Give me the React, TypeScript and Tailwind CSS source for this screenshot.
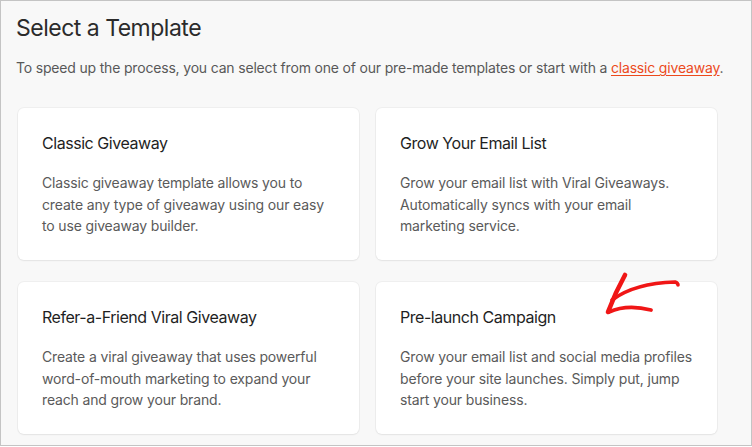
const templates = [
  {
    title: "Classic Giveaway",
    lines: ["Classic giveaway template allows you to", "create any type of giveaway using our easy", "to use giveaway builder."],
  },
  {
    title: "Grow Your Email List",
    lines: ["Grow your email list with Viral Giveaways.", "Automatically syncs with your email", "marketing service."],
  },
  {
    title: "Refer-a-Friend Viral Giveaway",
    lines: ["Create a viral giveaway that uses powerful", "word-of-mouth marketing to expand your", "reach and grow your brand."],
  },
  {
    title: "Pre-launch Campaign",
    lines: ["Grow your email list and social media profiles", "before your site launches. Simply put, jump", "start your business."],
  },
];

function TemplateCard({ title, lines }: { title: string; lines: string[] }) {
  return (
    <article className="h-[152px] rounded-[6px] bg-white pl-[24px] pt-[23px] shadow-[0_0_0_1px_rgba(0,0,0,0.035),0_1px_2px_rgba(0,0,0,0.05)]">
      <h3 className="text-[16px] leading-[24px] tracking-[-0.45px] text-[#1f1f1f]">{title}</h3>
      <p className="mt-[17px] whitespace-nowrap text-[14px] leading-[21.5px] tracking-[-0.15px] text-[#5a5a5a]">
        {lines.map((line, i) => (
          <span key={i} className="block">
            {line}
          </span>
        ))}
      </p>
    </article>
  );
}

function HandArrow() {
  return (
    <svg
      className="pointer-events-none absolute left-[594px] top-[267px]"
      width="95"
      height="55"
      viewBox="0 0 95 55"
      fill="none"
      stroke="#f01616"
      strokeLinecap="round"
      strokeLinejoin="round"
    >
      <path d="M30 7 Q20 25 13 44" strokeWidth="4.6" />
      <path d="M17 32 Q40 15 80 14 Q83 15 83 17" strokeWidth="3.6" />
      <path d="M14 44 Q32 36 56 42" strokeWidth="3.8" />
    </svg>
  );
}

export default function App() {
  return (
    <div
      className="relative h-[446px] w-[752px] border border-[#c4c4c4] bg-[#f8f8f8] pl-[15px] pt-[11px]"
      style={{ fontFamily: "Inter, 'Noto Sans', sans-serif" }}
    >
      <h1 className="text-[23px] leading-[32px] tracking-[-0.5px] text-[#2b2b2b]">Select a Template</h1>
      <p className="mt-[14px] text-[14px] leading-[20px] tracking-[-0.18px] text-[#585858]">
        To speed up the process, you can select from one of our pre-made templates or start with a{" "}
        <a href="#" className="text-[#ec4a1c] underline decoration-1 underline-offset-2">
          classic giveaway
        </a>
        .
      </p>
      <div className="ml-[2px] mt-[30px] grid w-[699px] grid-cols-2 gap-x-[17px] gap-y-[22px]">
        {templates.map((t) => (
          <TemplateCard key={t.title} title={t.title} lines={t.lines} />
        ))}
      </div>
      <HandArrow />
    </div>
  );
}
